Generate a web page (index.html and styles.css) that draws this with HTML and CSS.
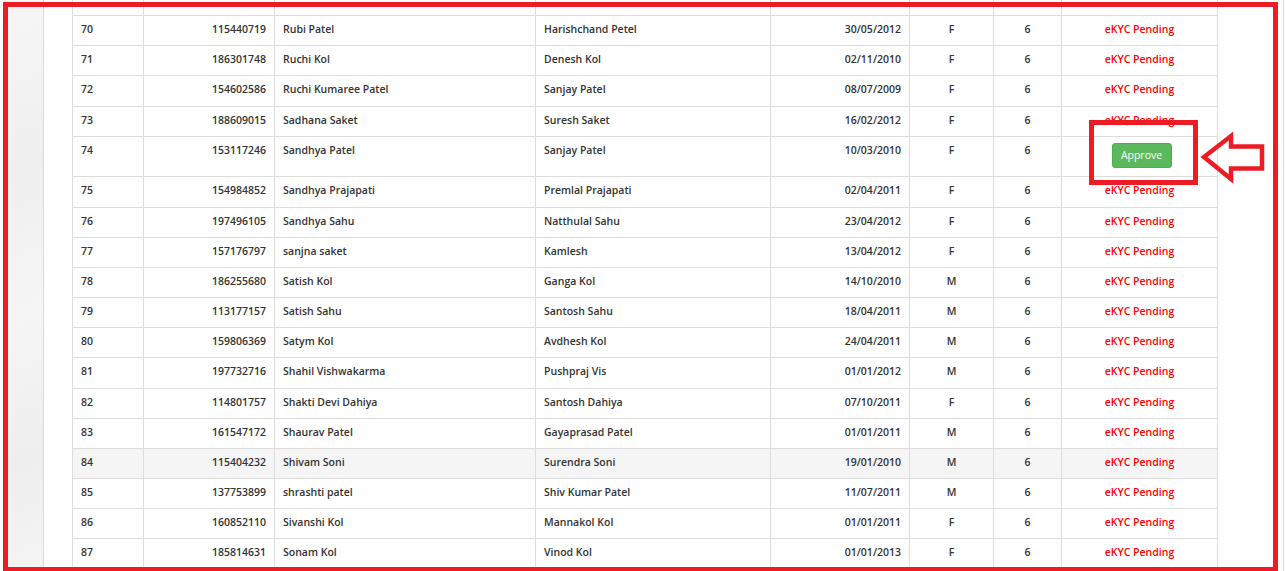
FILE: index.html
```html
<!DOCTYPE html>
<html>
<head>
<meta charset="utf-8">
<title>eKYC list</title>
<link rel="stylesheet" href="styles.css">
</head>
<body>
<div class="page">
  <aside class="side"></aside>
  <main class="main">
    <table class="grid">
      <tr class="stub">
        <td class="c1"></td><td class="c2"></td><td class="c3"></td><td class="c4"></td>
        <td class="c5"></td><td class="c6"></td><td class="c7"></td><td class="c8"></td>
      </tr>
      <tr><td>70</td><td class="r">115440719</td><td>Rubi Patel</td><td>Harishchand Petel</td><td class="r">30/05/2012</td><td class="m">F</td><td class="m">6</td><td class="m st">eKYC Pending</td></tr>
      <tr><td>71</td><td class="r">186301748</td><td>Ruchi Kol</td><td>Denesh Kol</td><td class="r">02/11/2010</td><td class="m">F</td><td class="m">6</td><td class="m st">eKYC Pending</td></tr>
      <tr><td>72</td><td class="r">154602586</td><td>Ruchi Kumaree Patel</td><td>Sanjay Patel</td><td class="r">08/07/2009</td><td class="m">F</td><td class="m">6</td><td class="m st">eKYC Pending</td></tr>
      <tr><td>73</td><td class="r">188609015</td><td>Sadhana Saket</td><td>Suresh Saket</td><td class="r">16/02/2012</td><td class="m">F</td><td class="m">6</td><td class="m st">eKYC Pending</td></tr>
      <tr><td>74</td><td class="r">153117246</td><td>Sandhya Patel</td><td>Sanjay Patel</td><td class="r">10/03/2010</td><td class="m">F</td><td class="m">6</td><td class="m"><button class="approve" type="button">Approve</button></td></tr>
      <tr><td>75</td><td class="r">154984852</td><td>Sandhya Prajapati</td><td>Premlal Prajapati</td><td class="r">02/04/2011</td><td class="m">F</td><td class="m">6</td><td class="m st">eKYC Pending</td></tr>
      <tr><td>76</td><td class="r">197496105</td><td>Sandhya Sahu</td><td>Natthulal Sahu</td><td class="r">23/04/2012</td><td class="m">F</td><td class="m">6</td><td class="m st">eKYC Pending</td></tr>
      <tr><td>77</td><td class="r">157176797</td><td>sanjna saket</td><td>Kamlesh</td><td class="r">13/04/2012</td><td class="m">F</td><td class="m">6</td><td class="m st">eKYC Pending</td></tr>
      <tr><td>78</td><td class="r">186255680</td><td>Satish Kol</td><td>Ganga Kol</td><td class="r">14/10/2010</td><td class="m">M</td><td class="m">6</td><td class="m st">eKYC Pending</td></tr>
      <tr><td>79</td><td class="r">113177157</td><td>Satish Sahu</td><td>Santosh Sahu</td><td class="r">18/04/2011</td><td class="m">M</td><td class="m">6</td><td class="m st">eKYC Pending</td></tr>
      <tr><td>80</td><td class="r">159806369</td><td>Satym Kol</td><td>Avdhesh Kol</td><td class="r">24/04/2011</td><td class="m">M</td><td class="m">6</td><td class="m st">eKYC Pending</td></tr>
      <tr><td>81</td><td class="r">197732716</td><td>Shahil Vishwakarma</td><td>Pushpraj Vis</td><td class="r">01/01/2012</td><td class="m">M</td><td class="m">6</td><td class="m st">eKYC Pending</td></tr>
      <tr><td>82</td><td class="r">114801757</td><td>Shakti Devi Dahiya</td><td>Santosh Dahiya</td><td class="r">07/10/2011</td><td class="m">F</td><td class="m">6</td><td class="m st">eKYC Pending</td></tr>
      <tr><td>83</td><td class="r">161547172</td><td>Shaurav Patel</td><td>Gayaprasad Patel</td><td class="r">01/01/2011</td><td class="m">M</td><td class="m">6</td><td class="m st">eKYC Pending</td></tr>
      <tr class="hover"><td>84</td><td class="r">115404232</td><td>Shivam Soni</td><td>Surendra Soni</td><td class="r">19/01/2010</td><td class="m">M</td><td class="m">6</td><td class="m st">eKYC Pending</td></tr>
      <tr><td>85</td><td class="r">137753899</td><td>shrashti patel</td><td>Shiv Kumar Patel</td><td class="r">11/07/2011</td><td class="m">M</td><td class="m">6</td><td class="m st">eKYC Pending</td></tr>
      <tr><td>86</td><td class="r">160852110</td><td>Sivanshi Kol</td><td>Mannakol Kol</td><td class="r">01/01/2011</td><td class="m">F</td><td class="m">6</td><td class="m st">eKYC Pending</td></tr>
      <tr><td>87</td><td class="r">185814631</td><td>Sonam Kol</td><td>Vinod Kol</td><td class="r">01/01/2013</td><td class="m">F</td><td class="m">6</td><td class="m st">eKYC Pending</td></tr>
    </table>
  </main>
  <div class="edge"></div>
</div>

<div class="frame"></div>
<div class="callout"></div>
<svg class="arrow" width="1285" height="571" viewBox="0 0 1285 571">
  <polygon points="1204,157 1231,136 1231,146.5 1262,146.5 1262,168.5 1231,168.5 1231,179" fill="none" stroke="#ed1c24" stroke-width="4.5" stroke-linejoin="miter"/>
</svg>
</body>
</html>
```

FILE: styles.css
```css
html, body {
  margin: 0;
  padding: 0;
  height: 100%;
  overflow: hidden;
  background: #ffffff;
}

body {
  font-family: "Open Sans", "Liberation Sans", sans-serif;
  font-size: 10.5px;
  color: #333333;
}

.page {
  display: flex;
  height: 571px;
}

.side {
  flex: none;
  width: 40px;
  margin-left: 3px;
  border-right: 1px solid #dadada;
  background: linear-gradient(160deg, #f6f6f6 0%, #efefef 30%, #f5f5f5 55%, #eeeeee 80%, #f4f4f4 100%);
}

.main {
  flex: 1;
  padding-left: 28px;
}

.edge {
  flex: none;
  width: 1px;
  margin-right: 1px;
  background: #dddddd;
}

.grid {
  border-collapse: separate;
  border-spacing: 0;
  table-layout: fixed;
  width: 1146px;
  border-left: 1px solid #dddddd;
}

.grid td {
  box-sizing: border-box;
  padding: 6px 8px 8px 8px;
  line-height: 15.17px;
  border-right: 1px solid #dddddd;
  border-bottom: 1px solid #dddddd;
  font-weight: 600;
  vertical-align: top;
  white-space: nowrap;
}

.grid .stub td {
  height: 16px;
  padding: 0;
}

.c1 { width: 71px; }
.c2 { width: 131px; }
.c3 { width: 261px; }
.c4 { width: 235px; }
.c5 { width: 139px; }
.c6 { width: 84px; }
.c7 { width: 68px; }
.c8 { width: 156px; }

.grid td.r { text-align: right; }
.grid td.m { text-align: center; }
.grid td.st { color: #ff0000; }

.grid tr.hover td { background: #f5f5f5; }

.approve {
  display: block;
  box-sizing: border-box;
  width: 60px;
  height: 25.7px;
  margin: 0 auto;
  position: relative;
  left: 2px;
  padding: 0;
  background: #5cb85c;
  border: 1px solid #4cae4c;
  border-radius: 3px;
  color: #ffffff;
  font-family: "Open Sans", "Liberation Sans", sans-serif;
  font-size: 10.5px;
  font-weight: 400;
  line-height: 23px;
}

.frame {
  position: absolute;
  left: 3px;
  top: 2px;
  width: 1275px;
  height: 570px;
  box-sizing: border-box;
  border: 5px solid #ed1c24;
  pointer-events: none;
}

.callout {
  position: absolute;
  left: 1089px;
  top: 120px;
  width: 109px;
  height: 65px;
  box-sizing: border-box;
  border: 5px solid #ed1c24;
  pointer-events: none;
}

.arrow {
  position: absolute;
  left: 0;
  top: 0;
  pointer-events: none;
}
```
